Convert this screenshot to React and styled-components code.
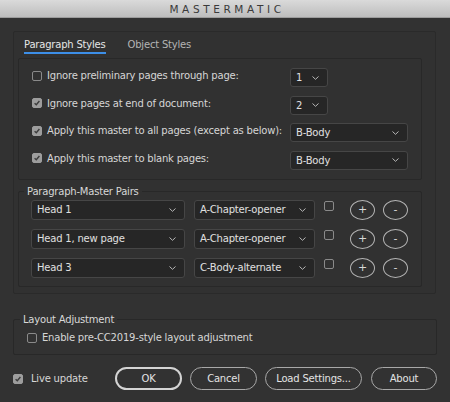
import React from "react";
import styled, { createGlobalStyle } from "styled-components";

const GlobalStyle = createGlobalStyle`
  html, body {
    margin: 0;
    padding: 0;
    background: #323232;
  }
  body {
    font-family: "DejaVu Sans", "Liberation Sans", sans-serif;
  }
`;

const Window = styled.div`
  width: 450px;
  height: 402px;
  background: #323232;
  color: #d6d6d6;
  font-size: 10px;
  letter-spacing: -0.2px;
  display: flex;
  flex-direction: column;
  overflow: hidden;
`;

const TitleBar = styled.div`
  height: 18px;
  box-sizing: border-box;
  background: linear-gradient(#dadada, #bdbdbd);
  border-bottom: 1px solid #9c9c9c;
  display: flex;
  align-items: center;
  justify-content: center;
  font-size: 10.5px;
  letter-spacing: 3.6px;
  color: #3a3a3a;
  padding-left: 4px;
`;

const Body = styled.div`
  padding: 13px 13px 0 13px;
  display: flex;
  flex-direction: column;
`;

const TabPanel = styled.div`
  height: 263px;
  box-sizing: border-box;
  margin-right: 1px;
  border: 1px solid #2a2a2a;
  border-radius: 2px;
  background: #313131;
  padding: 0 13px 0 4px;
  display: flex;
  flex-direction: column;
`;

const TabRow = styled.div`
  height: 22px;
  display: flex;
  gap: 22px;
  padding-left: 6px;
  margin-bottom: 4px;
`;

const Tab = styled.div`
  padding-top: 6px;
  height: 14px;
  line-height: 13px;
  color: ${(p) => (p.active ? "#e6e6e6" : "#b4b4b4")};
  border-bottom: 2px solid ${(p) => (p.active ? "#3d8fe8" : "transparent")};
`;

const OptionsGroup = styled.div`
  border: 1px solid #282828;
  border-radius: 2px;
  padding: 9px 0 9px 13px;
  display: grid;
  grid-template-columns: 258px auto;
  row-gap: 8.5px;
  align-items: center;
`;

const CheckLabel = styled.label`
  display: flex;
  align-items: center;
  gap: ${(p) => p.gap || 5}px;
  white-space: nowrap;
  margin-bottom: ${(p) => p.raise || 0}px;
`;

const Box = styled.span`
  width: 10px;
  height: 10px;
  box-sizing: border-box;
  border-radius: 2px;
  flex: none;
  display: flex;
  align-items: center;
  justify-content: center;
  border: 1px solid ${(p) => (p.checked ? "#9d9d9d" : "#8a8a8a")};
  background: ${(p) => (p.checked ? "#9d9d9d" : "transparent")};
  align-self: ${(p) => (p.top ? "flex-start" : "center")};
  margin-top: ${(p) => (p.top ? 1 : 0)}px;
`;

function Checkbox({ checked, top }) {
  return (
    <Box checked={checked} top={top}>
      {checked && (
        <svg width="8" height="8" viewBox="0 0 8 8">
          <path d="M1.6 4.2 L3.3 5.8 L6.4 2" fill="none" stroke="#3c3c3c" strokeWidth="1.4" />
        </svg>
      )}
    </Box>
  );
}

const Select = styled.div`
  width: ${(p) => p.w}px;
  height: ${(p) => p.h || 19}px;
  box-sizing: border-box;
  background: #262626;
  border: 1px solid #464646;
  border-radius: 3px;
  display: flex;
  align-items: center;
  justify-content: space-between;
  padding: 0 8px 0 5px;
  color: #e0e0e0;
  flex: none;
`;

function Dropdown({ value, w, h }) {
  return (
    <Select w={w} h={h}>
      <span>{value}</span>
      <svg width="7" height="4" viewBox="0 0 7 4">
        <path d="M0.5 0.5 L3.5 3.3 L6.5 0.5" fill="none" stroke="#b8b8b8" strokeWidth="1" />
      </svg>
    </Select>
  );
}

const Group = styled.fieldset`
  margin: ${(p) => p.mt}px 0 0 0;
  border: 1px solid #282828;
  border-radius: 2px;
  padding: ${(p) => p.pad};
  min-width: 0;
`;

const Legend = styled.legend`
  padding: 0 3px;
  margin-left: -7px;
  line-height: 13px;
  color: #d8d8d8;
`;

const PairsList = styled.div`
  display: flex;
  flex-direction: column;
  gap: 9px;
`;

const PairRow = styled.div`
  display: flex;
  align-items: center;
  height: 20px;
`;

const Spacer = styled.span`
  width: ${(p) => p.w}px;
  flex: none;
`;

const RoundBtn = styled.div`
  width: 25px;
  height: 20px;
  box-sizing: border-box;
  border: 1px solid #b4b4b4;
  border-radius: 50%;
  display: flex;
  align-items: center;
  justify-content: center;
  color: #d8d8d8;
  font-size: 11px;
  flex: none;
`;

const Footer = styled.div`
  display: flex;
  align-items: center;
  margin-top: 12px;
  height: 23px;
`;

const LiveLabel = styled(CheckLabel)`
  width: 102px;
  gap: 8px;
`;

const Buttons = styled.div`
  display: flex;
  gap: 8px;
`;

const Button = styled.div`
  width: ${(p) => p.w}px;
  height: 23px;
  box-sizing: border-box;
  border: ${(p) => (p.primary ? "2px solid #d4d4d4" : "1px solid #a8a8a8")};
  border-radius: 12px;
  display: flex;
  align-items: center;
  justify-content: center;
  color: #e4e4e4;
`;

const pairs = [
  ["Head 1", "A-Chapter-opener"],
  ["Head 1, new page", "A-Chapter-opener"],
  ["Head 3", "C-Body-alternate"],
];

const options = [
  [false, "Ignore preliminary pages through page:", "1", 38],
  [true, "Ignore pages at end of document:", "2", 38],
  [true, "Apply this master to all pages (except as below):", "B-Body", 118],
  [true, "Apply this master to blank pages:", "B-Body", 118],
];

export default function App() {
  return (
    <Window>
      <GlobalStyle />
      <TitleBar>MASTERMATIC</TitleBar>
      <Body>
        <TabPanel>
          <TabRow>
            <Tab active>Paragraph Styles</Tab>
            <Tab>Object Styles</Tab>
          </TabRow>
          <OptionsGroup>
            {options.map(([checked, label, value, w], i) => (
              <React.Fragment key={i}>
                <CheckLabel raise={4}>
                  <Checkbox checked={checked} />
                  {label}
                </CheckLabel>
                <Dropdown value={value} w={w} />
              </React.Fragment>
            ))}
          </OptionsGroup>
          <Group pad="2px 13px 8px 12px" mt={5}>
            <Legend>Paragraph-Master Pairs</Legend>
            <PairsList>
              {pairs.map(([para, master], i) => (
                <PairRow key={i}>
                  <Dropdown value={para} w={154} h={20} />
                  <Spacer w={9} />
                  <Dropdown value={master} w={121} h={20} />
                  <Spacer w={9} />
                  <Checkbox top />
                  <Spacer w={16} />
                  <RoundBtn>+</RoundBtn>
                  <Spacer w={8} />
                  <RoundBtn>-</RoundBtn>
                </PairRow>
              ))}
            </PairsList>
          </Group>
        </TabPanel>
        <Group pad="6px 13px 11px 13px" mt={19}>
          <Legend>Layout Adjustment</Legend>
          <CheckLabel>
            <Checkbox />
            Enable pre-CC2019-style layout adjustment
          </CheckLabel>
        </Group>
        <Footer>
          <LiveLabel>
            <Checkbox checked />
            Live update
          </LiveLabel>
          <Buttons>
            <Button primary w={67}>OK</Button>
            <Button w={67}>Cancel</Button>
            <Button w={97}>Load Settings...</Button>
            <Button w={66} style={{ marginLeft: 1 }}>About</Button>
          </Buttons>
        </Footer>
      </Body>
    </Window>
  );
}
